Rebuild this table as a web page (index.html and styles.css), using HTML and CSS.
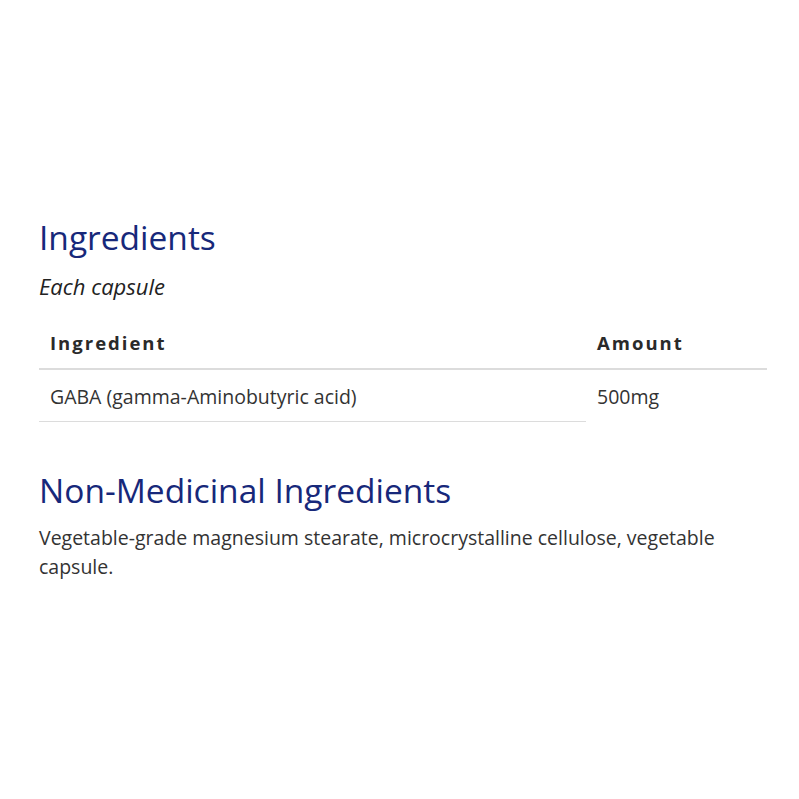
FILE: index.html
```html
<!DOCTYPE html>
<html>
<head>
<meta charset="utf-8">
<link rel="stylesheet" href="styles.css">
</head>
<body>
<main class="content">
  <h2 class="heading">Ingredients</h2>
  <p class="serving">Each capsule</p>
  <table class="ing-table">
    <thead>
      <tr>
        <th class="col-name">Ingredient</th>
        <th class="col-amount">Amount</th>
      </tr>
    </thead>
    <tbody>
      <tr>
        <td class="cell-name">GABA (gamma-Aminobutyric acid)</td>
        <td class="cell-amount">500mg</td>
      </tr>
    </tbody>
  </table>
  <h2 class="heading heading-second">Non-Medicinal Ingredients</h2>
  <p class="body-text">Vegetable-grade magnesium stearate, microcrystalline cellulose, vegetable capsule.</p>
</main>
</body>
</html>
```

FILE: styles.css
```css
html, body {
  margin: 0;
  padding: 0;
  background: #ffffff;
}
body {
  font-family: "Open Sans", "Liberation Sans", sans-serif;
  color: #333333;
}
.content {
  padding: 214px 32px 0 39px;
}
.heading {
  margin: 0;
  font-weight: 400;
  font-size: 33.5px;
  line-height: 46px;
  color: #17287a;
}
.serving {
  margin: 11px 0 0;
  font-style: italic;
  font-size: 22px;
  line-height: 30px;
  color: #222222;
}
.ing-table {
  margin-top: 19px;
  width: 728px;
  border-collapse: collapse;
}
.ing-table th {
  text-align: left;
  font-weight: 700;
  font-size: 18.5px;
  letter-spacing: 2px;
  color: #2a2a2a;
  padding: 10px 11px 13px;
  border-bottom: 2px solid #dcdcdc;
}
.ing-table td {
  font-size: 19.5px;
  padding: 13px 11px 11px;
  vertical-align: top;
}
.cell-name {
  width: 525px;
  border-bottom: 1px solid #dcdcdc;
}
.heading-second {
  margin-top: 45px;
}
.body-text {
  margin: 10px 0 0;
  font-size: 19.5px;
  line-height: 29px;
  color: #333333;
}
```
